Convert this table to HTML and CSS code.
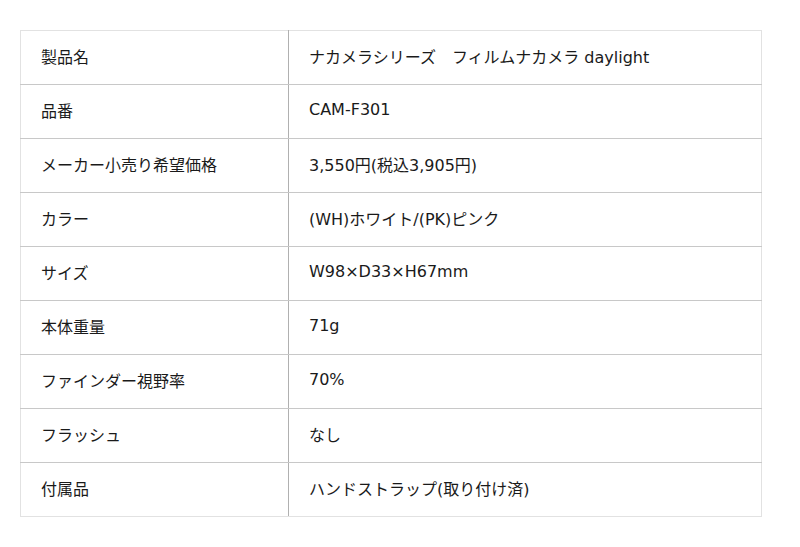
FILE: index.html
```html
<!DOCTYPE html>
<html lang="ja">
<head>
<meta charset="utf-8">
<link rel="stylesheet" href="styles.css">
</head>
<body>
<table class="spec">
<tbody>
<tr><th>製品名</th><td>ナカメラシリーズ　フィルムナカメラ daylight</td></tr>
<tr><th>品番</th><td>CAM-F301</td></tr>
<tr><th>メーカー小売り希望価格</th><td>3,550円(税込3,905円)</td></tr>
<tr><th>カラー</th><td>(WH)ホワイト/(PK)ピンク</td></tr>
<tr><th>サイズ</th><td>W98×D33×H67mm</td></tr>
<tr><th>本体重量</th><td>71g</td></tr>
<tr><th>ファインダー視野率</th><td>70%</td></tr>
<tr><th>フラッシュ</th><td>なし</td></tr>
<tr><th>付属品</th><td>ハンドストラップ(取り付け済)</td></tr>
</tbody>
</table>
</body>
</html>
```
FILE: styles.css
```css
html, body {
  margin: 0;
  padding: 0;
  background: #fff;
}
body {
  font-family: "DejaVu Sans", "Noto Sans CJK JP", sans-serif;
  font-size: 16px;
  color: #1a1a1a;
}
.spec {
  margin: 30px 0 0 20px;
  width: 742px;
  border-collapse: collapse;
  border: 1px solid #e2e2e2;
}
.spec th,
.spec td {
  height: 49px;
  padding: 0 20px 4px;
  text-align: left;
  font-weight: normal;
  vertical-align: middle;
  border-bottom: 1px solid #c8c8c8;
}
.spec tr:last-child th,
.spec tr:last-child td {
  border-bottom: 1px solid #e2e2e2;
}
.spec th {
  width: 268px;
  box-sizing: border-box;
  border-right: 1px solid #b0b0b0;
}
```
